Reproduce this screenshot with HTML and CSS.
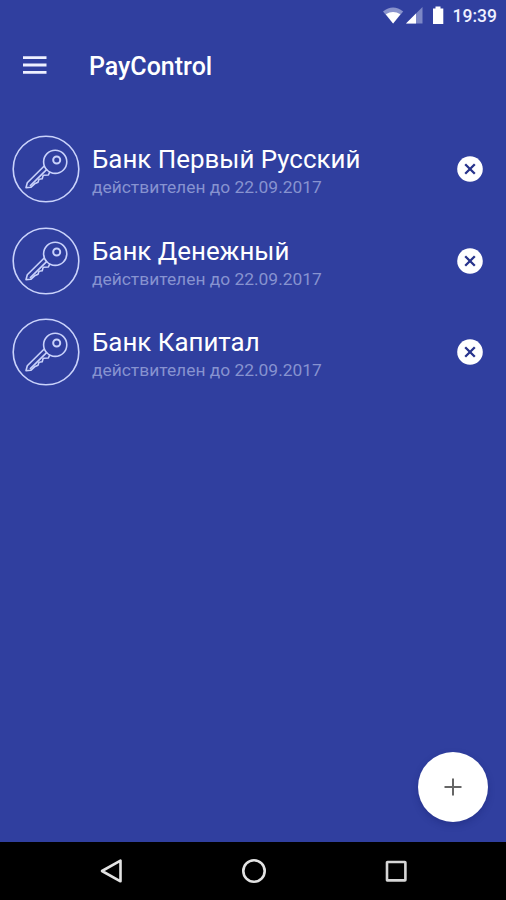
FILE: index.html
```html
<!DOCTYPE html>
<html lang="ru">
<head>
<meta charset="utf-8">
<title>PayControl</title>
<link rel="stylesheet" href="styles.css">
</head>
<body>
<svg class="defs" aria-hidden="true">
  <symbol id="key" viewBox="0 0 68 68">
    <g fill="none" stroke="#c9d2fb" stroke-width="1.6" stroke-linejoin="round" stroke-linecap="round">
      <circle cx="34" cy="34" r="32.8"/>
      <circle cx="43.2" cy="26.8" r="11.6"/>
      <circle cx="44.7" cy="25" r="3.5" stroke-width="2"/>
      <path d="M32.2 31 15.3 47.8 14 52.6 18.8 52.3 22.6 48.8 26 47.3 27 44.3 30.2 43.7 31.2 40.3 36.4 40 37.6 37.2"/>
      <path d="M34.6 34.6 18.4 50.6"/>
    </g>
  </symbol>
  <symbol id="remove" viewBox="0 0 26 26">
    <circle cx="13" cy="13" r="12.8" fill="#fff"/>
    <path d="M8.2 8.2l9.6 9.6M17.8 8.2l-9.6 9.6" stroke="#27338c" stroke-width="2.3"/>
  </symbol>
</svg>
<div class="screen">
  <header class="status">
    <svg class="signals" width="64" height="22" viewBox="0 0 64 22">
      <path d="M0 6.5Q10 -1.7 20.2 6.5L10.1 18.6Z" fill="#8993cc"/>
      <path d="M2.8 9.3Q10 4.6 17.4 9.3L10.1 18.6Z" fill="#fff"/>
      <path d="M39.5 2V18.5H23Z" fill="#7c87c6"/>
      <path d="M33 8.5V18.5H23Z" fill="#fff"/>
      <path d="M50 3.5H52.5V1.5H57.5V3.5H60.3V19H50Z" fill="#fff"/>
    </svg>
    <span class="clock">19:39</span>
  </header>
  <nav class="toolbar">
    <svg class="menu" width="24" height="18" viewBox="0 0 24 18"><path d="M0 1.6H23.5M0 9H23.5M0 16.4H23.5" stroke="#eef0ff" stroke-width="2.8"/></svg>
    <h1 class="title">PayControl</h1>
  </nav>
  <main class="list">
    <section class="row">
      <svg class="key"><use href="#key"/></svg>
      <div class="info"><h2 class="name">Банк Первый Русский</h2><p class="date">действителен до 22.09.2017</p></div>
      <svg class="remove"><use href="#remove"/></svg>
    </section>
    <section class="row">
      <svg class="key"><use href="#key"/></svg>
      <div class="info"><h2 class="name">Банк Денежный</h2><p class="date">действителен до 22.09.2017</p></div>
      <svg class="remove"><use href="#remove"/></svg>
    </section>
    <section class="row">
      <svg class="key"><use href="#key"/></svg>
      <div class="info"><h2 class="name">Банк Капитал</h2><p class="date">действителен до 22.09.2017</p></div>
      <svg class="remove"><use href="#remove"/></svg>
    </section>
  </main>
  <button class="fab" aria-label="Добавить"><svg width="18" height="18" viewBox="0 0 18 18"><path d="M9 .5V17.5M.5 9H17.5" stroke="#666" stroke-width="2"/></svg></button>
  <footer class="navbar">
    <svg width="24" height="26" viewBox="0 0 24 26"><path d="M2 13 20.5 2.7V23.3Z" fill="none" stroke="#e3e3e3" stroke-width="2.6" stroke-linejoin="round"/></svg>
    <svg width="26" height="26" viewBox="0 0 26 26"><circle cx="13" cy="13" r="10.7" fill="none" stroke="#e3e3e3" stroke-width="2.6"/></svg>
    <svg width="24" height="24" viewBox="0 0 24 24"><rect x="3" y="3" width="18.4" height="18.4" rx=".5" fill="none" stroke="#d6d6d6" stroke-width="2.6"/></svg>
  </footer>
</div>
</body>
</html>
```
FILE: styles.css
```css
* { box-sizing: border-box; margin: 0; padding: 0; }
body { font-family: Roboto, "Liberation Sans", sans-serif; color: #fff; }
svg { display: block; flex: none; }
.defs { position: absolute; width: 0; height: 0; }
.screen { position: relative; display: flex; flex-direction: column; width: 506px; height: 900px; background: #303f9f; overflow: hidden; }
.status { display: flex; justify-content: flex-end; height: 32px; padding: 5px 9px 0 0; }
.clock { margin-left: 6px; font-size: 17.5px; line-height: 22px; font-weight: 500; color: #eef0ff; }
.toolbar { display: flex; align-items: center; height: 66px; padding-left: 23px; }
.title { margin-left: 42px; padding-top: 3px; font-size: 25px; line-height: 30px; font-weight: 500; }
.list { flex: 1; padding-top: 25.5px; }
.row { display: flex; align-items: center; height: 91.5px; padding: 0 23.5px 0 12px; }
.key { width: 68px; height: 68px; }
.info { flex: 1; margin-left: 12px; padding-top: 5px; }
.name { font-size: 25.9px; line-height: 32px; font-weight: 400; white-space: nowrap; }
.date { font-size: 17.4px; line-height: 25px; color: #8793d0; white-space: nowrap; }
.remove { width: 26px; height: 26px; }
.fab { position: absolute; left: 418px; top: 752px; display: flex; align-items: center; justify-content: center; width: 70px; height: 70px; border: 0; border-radius: 50%; background: #fff; box-shadow: 0 3px 7px rgba(15, 25, 100, .3); }
.navbar { display: flex; align-items: center; justify-content: space-between; height: 58px; padding: 0 98px 0 100px; background: #000; }
```
